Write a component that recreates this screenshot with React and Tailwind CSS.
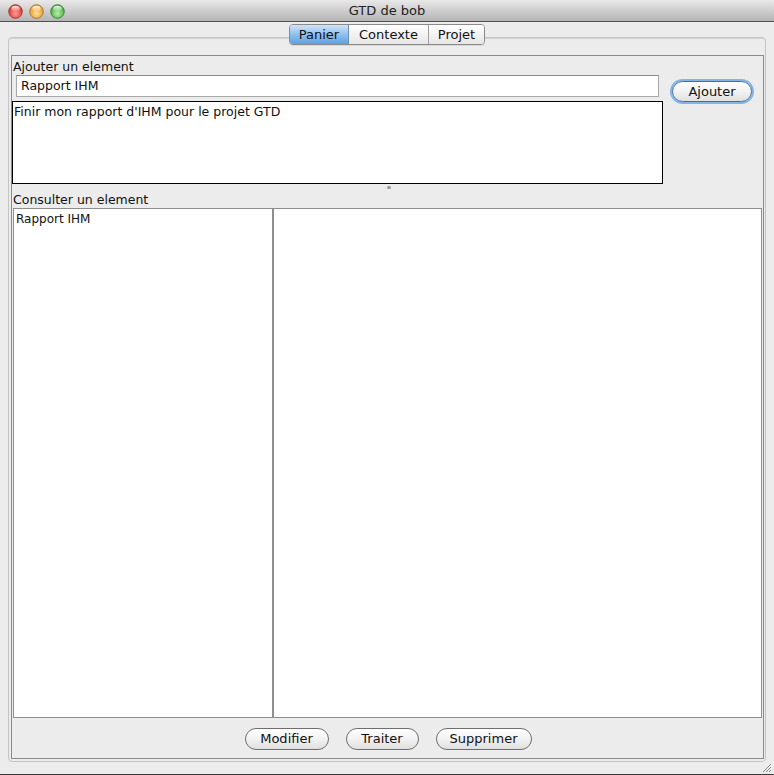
import React from "react";

const font = { fontFamily: '"DejaVu Sans", "Lucida Grande", sans-serif' };

function Light({ c1, c2, c3 }) {
  return (
    <svg width="15" height="15" viewBox="0 0 15 15">
      <defs>
        <radialGradient id={"g" + c1} cx="50%" cy="65%" r="60%">
          <stop offset="0%" stopColor={c3} />
          <stop offset="100%" stopColor={c1} />
        </radialGradient>
        <linearGradient id={"h" + c1} x1="0" y1="0" x2="0" y2="1">
          <stop offset="0%" stopColor="#ffffff" stopOpacity="0.9" />
          <stop offset="100%" stopColor="#ffffff" stopOpacity="0.1" />
        </linearGradient>
      </defs>
      <circle cx="7.5" cy="7.5" r="6.8" fill={`url(#g${c1})`} stroke={c2} strokeWidth="0.8" />
      <ellipse cx="7.5" cy="4.6" rx="4.2" ry="2.8" fill={`url(#h${c1})`} />
    </svg>
  );
}

function AquaButton({ children, className = "", focused = false }) {
  return (
    <div
      className={
        "flex items-center justify-center rounded-full border bg-gradient-to-b from-[#ffffff] via-[#f2f2f2] to-[#e0e0e0] text-[13px] text-[#111] " +
        (focused ? "shadow-[0_0_0_2px_#86b3e6] border-[#3f6ea8] " : "border-[#6e6e6e] ") +
        className
      }
    >
      {children}
    </div>
  );
}

export default function App() {
  return (
    <div className="w-[774px] h-[775px] bg-[#ececec] flex flex-col overflow-hidden" style={font}>
      {/* Title bar */}
      <div className="relative h-[22px] shrink-0 bg-gradient-to-b from-[#e9e9e9] to-[#b4b4b4] border-b border-[#515151] flex items-center justify-center">
        <div className="absolute left-[8px] top-[4px] flex gap-[6px]">
          <Light c1="#d6322b" c2="#9b2420" c3="#ff9a93" />
          <Light c1="#e0962a" c2="#a36a1a" c3="#ffe08c" />
          <Light c1="#3ea73a" c2="#2a7a27" c3="#b7f0a6" />
        </div>
        <span className="text-[13px] text-[#222] leading-none">GTD de bob</span>
      </div>

      {/* Body */}
      <div className="flex-1 flex flex-col px-[8px] pt-[2px]">
        {/* Tabs */}
        <div className="relative z-10 flex justify-center h-[21px]">
          <div className="flex h-[21px] rounded-[4px] border border-[#8a8a8a] overflow-hidden text-[13px] text-[#111] shadow-[0_1px_0_#d8d8d8]">
            <div className="w-[59px] flex items-center justify-center bg-gradient-to-b from-[#cfe4f8] via-[#8fc0ef] to-[#5d9fe0] border-r border-[#6f8fb8]">
              Panier
            </div>
            <div className="w-[80px] flex items-center justify-center bg-gradient-to-b from-[#ffffff] to-[#e6e6e6] border-r border-[#a0a0a0]">
              Contexte
            </div>
            <div className="w-[55px] flex items-center justify-center bg-gradient-to-b from-[#ffffff] to-[#e6e6e6]">
              Projet
            </div>
          </div>
        </div>

        {/* Pane */}
        <div className="mt-[-8px] h-[725px] rounded-[4px] border border-[#c4c4c4] shadow-[inset_0_1px_0_#d6d6d6] pt-[17px] pl-[2px] pr-[1px] pb-[2px] flex flex-col">
          <div className="flex-1 border border-[#8a8a8a] flex flex-col">
            <div className="pl-[1px] h-[19px] pt-[3px] text-[12.5px] leading-[16px] text-[#111]">Ajouter un element</div>

            <div className="flex">
              <div className="w-[651px] flex flex-col">
                <div className="ml-[4px] w-[643px] h-[22px] border border-[#a8a8a8] border-t-[#8c8c8c] bg-white flex items-center pl-[4px] text-[12.5px] text-[#111]">
                  Rapport IHM
                </div>
                <div className="mt-[4px] h-[83px] border border-black bg-white text-[12.5px] leading-[16px] text-[#111] pl-[1px] pt-[2px]">
                  Finir mon rapport d'IHM pour le projet GTD
                </div>
              </div>
              <AquaButton focused className="ml-[9px] mt-[6px] w-[80px] h-[21px]">
                Ajouter
              </AquaButton>
            </div>

            {/* Splitter */}
            <div className="h-[7px] flex justify-center">
              <div className="mt-[2px] ml-[2px] w-[4px] h-[3px] rounded-full bg-[#9a9a9a]" />
            </div>

            <div className="pl-[1px] h-[17px] pt-[1px] text-[12.5px] leading-[16px] text-[#111]">Consulter un element</div>

            {/* Lists */}
            <div className="ml-[1px] mr-[1px] h-[510px] border border-[#8e8e8e] flex bg-white">
              <div className="w-[260px] border-r-2 border-[#8e8e8e] text-[12px] leading-[16px] text-[#111] pl-[2px] pt-[2px]">
                Rapport IHM
              </div>
              <div className="flex-1" />
            </div>

            {/* Buttons */}
            <div className="flex-1 flex justify-center items-start pt-[10px] gap-[17px] pl-[1px]">
              <AquaButton className="w-[84px] h-[22px]">Modifier</AquaButton>
              <AquaButton className="w-[73px] h-[22px]">Traiter</AquaButton>
              <AquaButton className="w-[96px] h-[22px]">Supprimer</AquaButton>
            </div>
          </div>
        </div>

        {/* footer w/ grip */}
        <div className="flex-1 flex justify-end items-end pb-[1px]">
          <svg width="11" height="11" viewBox="0 0 11 11" className="mr-[-6px]">
            <path d="M10 2 L2 10 M10 5 L5 10 M10 8 L8 10" stroke="#8a8a8a" strokeWidth="1" />
          </svg>
        </div>
      </div>
      <div className="h-[1px] bg-[#3a3a3a] shrink-0" />
    </div>
  );
}
